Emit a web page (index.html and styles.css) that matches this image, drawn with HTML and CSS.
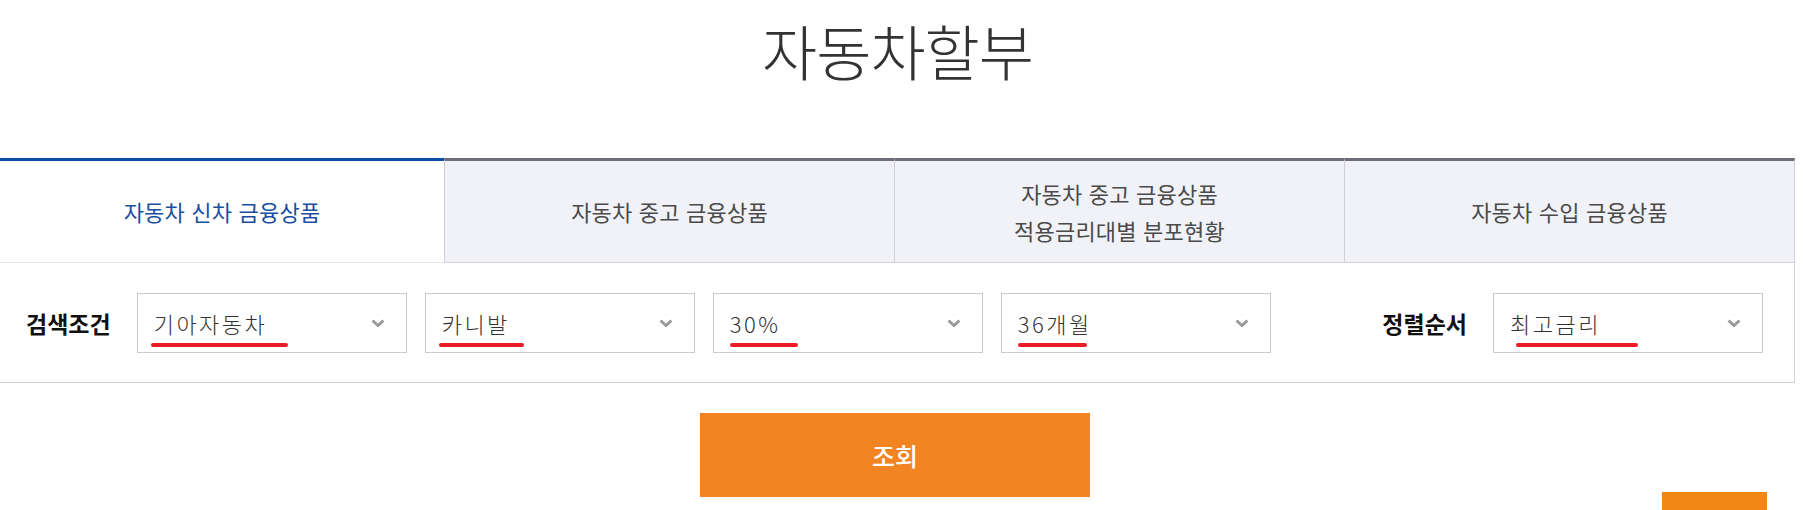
FILE: index.html
```html
<!DOCTYPE html>
<html lang="ko">
<head>
  <meta charset="UTF-8">
  <title>자동차할부</title>
  <meta name="viewport" content="width=device-width, initial-scale=1.0">
  <link rel="stylesheet" href="styles.css">
</head>
<body>

  <div class="page">
    <h1 class="title">자동차할부</h1>

    <ul class="tabs">
      <li class="tab active">자동차 신차 금융상품</li>
      <li class="tab">자동차 중고 금융상품</li>
      <li class="tab">자동차 중고 금융상품<br>적용금리대별 분포현황</li>
      <li class="tab">자동차 수입 금융상품</li>
    </ul>

    <div class="search">
      <span class="search-label">검색조건</span>
      <div class="select-group">
        <div class="select mark-1">
          <span>기아자동차</span>
          <svg class="arrow" width="14" height="8" viewBox="0 0 14 8"><polyline points="1.5,1.5 7,6.5 12.5,1.5" /></svg>
        </div>
        <div class="select mark-2">
          <span>카니발</span>
          <svg class="arrow" width="14" height="8" viewBox="0 0 14 8"><polyline points="1.5,1.5 7,6.5 12.5,1.5" /></svg>
        </div>
        <div class="select mark-3">
          <span>30%</span>
          <svg class="arrow" width="14" height="8" viewBox="0 0 14 8"><polyline points="1.5,1.5 7,6.5 12.5,1.5" /></svg>
        </div>
        <div class="select mark-4">
          <span>36개월</span>
          <svg class="arrow" width="14" height="8" viewBox="0 0 14 8"><polyline points="1.5,1.5 7,6.5 12.5,1.5" /></svg>
        </div>
      </div>

      <div class="sort">
        <span class="search-label">정렬순서</span>
        <div class="select mark-5">
          <span>최고금리</span>
          <svg class="arrow" width="14" height="8" viewBox="0 0 14 8"><polyline points="1.5,1.5 7,6.5 12.5,1.5" /></svg>
        </div>
      </div>
    </div>

    <button class="btn-search">조회</button>
  </div>

  <a class="btn-top" href="#"></a>

</body>
</html>
```

FILE: styles.css
```css
body {
  font-family: "Noto Sans CJK KR", "Noto Sans", sans-serif;
  margin: 0;
  padding: 0;
  background: #fff;
  color: #333;
}

.page {
  width: 1795px;
}

.title {
  margin: 0;
  padding-top: 20px;
  height: 158px;
  box-sizing: border-box;
  font-size: 60px;
  line-height: 1;
  font-weight: 300;
  letter-spacing: -1px;
  text-align: center;
  color: #333;
}

/* tabs */
.tabs {
  display: grid;
  grid-template-columns: 444px 450px 450px 451px;
  list-style: none;
  margin: 0;
  padding: 0;
}

.tab {
  box-sizing: border-box;
  height: 105px;
  display: flex;
  align-items: center;
  justify-content: center;
  text-align: center;
  font-size: 22px;
  line-height: 37px;
  letter-spacing: 0.2px;
  color: #4a4a4a;
  background: #f1f2f8;
  border-top: 3px solid #6e6b7b;
  border-left: 1px solid #cfcfd4;
  border-bottom: 1px solid #d4d4d8;
}

.tab:last-child {
  border-right: 1px solid #cfcfd4;
}

.tab.active {
  background: #fff;
  color: #1a4f9f;
  border-top-color: #0d4ea3;
  border-left: none;
  border-bottom-color: #e8e8e8;
}

/* search panel */
.search {
  box-sizing: border-box;
  height: 120px;
  display: flex;
  align-items: center;
  padding: 30px 31px 29px 26px;
  border-right: 1px solid #cfcfd4;
  border-bottom: 1px solid #d0d0d0;
}

.search-label {
  font-size: 23px;
  font-weight: bold;
  letter-spacing: 0;
  color: #111;
  margin-right: 26px;
}

.select-group {
  display: flex;
  gap: 18px;
}

.sort {
  margin-left: auto;
  display: flex;
  align-items: center;
}

.select {
  position: relative;
  box-sizing: border-box;
  width: 270px;
  height: 60px;
  display: flex;
  align-items: center;
  justify-content: space-between;
  padding: 0 21px 0 16px;
  border: 1px solid #cbcbcb;
  background: #fff;
  font-size: 22px;
  font-weight: 300;
  letter-spacing: 2.5px;
  color: #333;
}

.arrow {
  fill: none;
  stroke: #999;
  stroke-width: 3;
}

/* red marker lines drawn over the values */
.select::after {
  content: "";
  position: absolute;
  top: 49px;
  height: 4px;
  border-radius: 2px;
  background: #ec1c24;
}

.mark-1::after { left: 13px; width: 137px; }
.mark-2::after { left: 13px; width: 85px; }
.mark-3::after { left: 16px; width: 68px; }
.mark-4::after { left: 16px; width: 69px; }
.mark-5::after { left: 22px; width: 122px; }

.btn-search {
  display: block;
  width: 390px;
  height: 84px;
  margin: 30px 0 0 700px;
  border: none;
  background: #f38422;
  color: #fff;
  font-family: inherit;
  font-size: 25px;
  font-weight: 500;
  cursor: pointer;
}

.btn-top {
  position: fixed;
  right: 40px;
  bottom: -30px;
  width: 105px;
  height: 48px;
  background: #f28713;
}
```
